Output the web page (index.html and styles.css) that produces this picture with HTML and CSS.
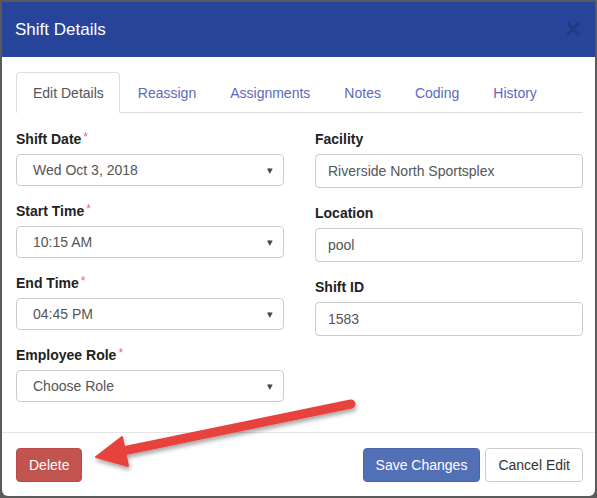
FILE: index.html
```html
<!DOCTYPE html>
<html>
<head>
<meta charset="utf-8">
<link rel="stylesheet" href="styles.css">
</head>
<body>
<div class="modal">
  <div class="modal-header">
    <h4 class="title">Shift Details</h4>
    <span class="close">&times;</span>
  </div>
  <div class="modal-body">
    <ul class="tabs">
      <li class="tab active">Edit Details</li>
      <li class="tab">Reassign</li>
      <li class="tab">Assignments</li>
      <li class="tab">Notes</li>
      <li class="tab">Coding</li>
      <li class="tab">History</li>
    </ul>
    <div class="form">
      <div class="col">
        <div class="group sel-group">
          <label class="lbl">Shift Date<span class="req">*</span></label>
          <div class="select">Wed Oct 3, 2018<span class="caret">&#9662;</span></div>
        </div>
        <div class="group sel-group">
          <label class="lbl">Start Time<span class="req">*</span></label>
          <div class="select">10:15 AM<span class="caret">&#9662;</span></div>
        </div>
        <div class="group sel-group">
          <label class="lbl">End Time<span class="req">*</span></label>
          <div class="select">04:45 PM<span class="caret">&#9662;</span></div>
        </div>
        <div class="group sel-group">
          <label class="lbl">Employee Role<span class="req">*</span></label>
          <div class="select">Choose Role<span class="caret">&#9662;</span></div>
        </div>
      </div>
      <div class="col">
        <div class="group">
          <label class="lbl">Facility</label>
          <div class="input">Riverside North Sportsplex</div>
        </div>
        <div class="group">
          <label class="lbl">Location</label>
          <div class="input">pool</div>
        </div>
        <div class="group">
          <label class="lbl">Shift ID</label>
          <div class="input">1583</div>
        </div>
      </div>
    </div>
  </div>
  <div class="modal-footer">
    <button class="btn btn-danger">Delete</button>
    <div class="right-btns">
      <button class="btn btn-primary">Save Changes</button>
      <button class="btn btn-default">Cancel Edit</button>
    </div>
  </div>
</div>
<svg class="arrow" width="597" height="498" viewBox="0 0 597 498">
  <defs>
    <filter id="sh" x="-10%" y="-10%" width="130%" height="140%">
      <feDropShadow dx="1" dy="3" stdDeviation="2" flood-color="#000" flood-opacity="0.35"/>
    </filter>
  </defs>
  <g filter="url(#sh)" fill="#e8423d" stroke="#e8423d">
    <line x1="351" y1="404" x2="118" y2="452" stroke-width="9" stroke-linecap="round"/>
    <polygon points="96,457 122,437 128,466" stroke-width="2" stroke-linejoin="round"/>
  </g>
</svg>
</body>
</html>
```
FILE: styles.css
```css
* { box-sizing: border-box; }
html, body { margin: 0; padding: 0; }
body {
  width: 597px;
  height: 498px;
  background: #5a5a5a;
  font-family: "Liberation Sans", Arial, sans-serif;
  font-size: 14px;
  color: #333;
  overflow: hidden;
  position: relative;
}
.modal {
  margin: 2px 2px 0 2px;
  height: 494px;
  background: #fff;
  border-radius: 0 0 6px 6px;
  display: flex;
  flex-direction: column;
  overflow: hidden;
}
.modal-header {
  background: #27439a;
  height: 55px;
  padding: 0 12px 0 13px;
  display: flex;
  align-items: center;
  justify-content: space-between;
}
.title {
  margin: 0;
  color: #fff;
  font-size: 17px;
  font-weight: normal;
  line-height: 20px;
}
.close {
  color: #1f3a85;
  font-size: 27px;
  font-weight: bold;
  line-height: 20px;
  margin-right: 2px;
  position: relative;
  top: -1px;
}
.modal-body {
  flex: 1;
  padding: 15px 12px 0 14px;
  border-bottom: 1px solid #e5e5e5;
}
.tabs {
  list-style: none;
  margin: 0;
  padding: 0;
  display: flex;
  border-bottom: 1px solid #ddd;
  height: 41px;
}
.tab {
  padding: 10px 15px;
  line-height: 20px;
  margin-right: 2px;
  color: #5b6ac0;
  border: 1px solid transparent;
  border-radius: 4px 4px 0 0;
  margin-bottom: -1px;
}
.tab.active {
  color: #555;
  border-color: #ddd;
  border-bottom-color: #fff;
  background: #fff;
  padding: 10px 15px 10px 16px;
}
.form {
  display: flex;
  gap: 31px;
  padding-top: 16px;
}
.col { width: 268px; }
.group { margin-bottom: 15px; }
.lbl {
  display: block;
  font-weight: bold;
  color: #222;
  line-height: 20px;
  height: 20px;
  margin-bottom: 5px;
}
.req {
  color: #c9302c;
  font-weight: normal;
  font-size: 12px;
  line-height: 0;
  margin-left: 2px;
  position: relative;
  top: -3px;
  opacity: 0.7;
}
.select, .input {
  border: 1px solid #ccc;
  border-radius: 4px;
  color: #555;
  display: flex;
  align-items: center;
  background: #fff;
}
.select {
  height: 32px;
  padding: 0 10px 0 16px;
  justify-content: space-between;
}
.input {
  height: 34px;
  padding: 0 12px;
}
.caret {
  font-size: 11px;
  color: #444;
}
.modal-footer {
  height: 63px;
  padding: 15px 12px 0 14px;
  display: flex;
  justify-content: space-between;
  align-items: flex-start;
}
.right-btns { display: flex; gap: 5px; }
.btn {
  font-family: "Liberation Sans", Arial, sans-serif;
  font-size: 14px;
  height: 34px;
  padding: 0 12px;
  border-radius: 4px;
  border: 1px solid transparent;
  line-height: 20px;
}
.btn-danger { background: #c25450; color: #fff; border-color: #b94a46; }
.btn-primary { background: #5270b5; color: #fff; border-color: #4a66aa; }
.btn-default { background: #fff; color: #333; border-color: #ccc; }
.arrow {
  position: absolute;
  left: 0;
  top: 0;
  pointer-events: none;
}
```
